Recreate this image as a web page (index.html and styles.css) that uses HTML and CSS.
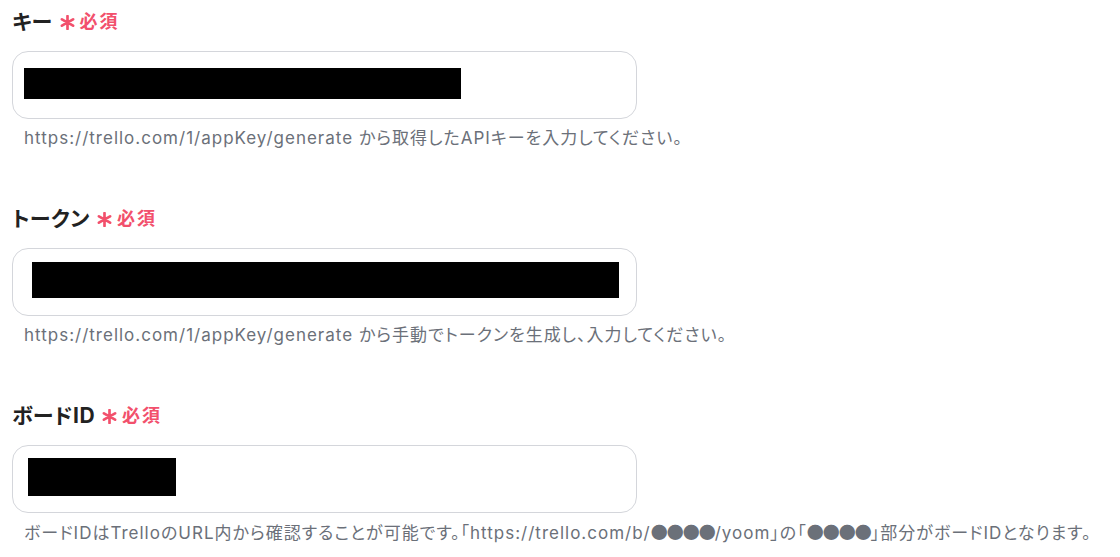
FILE: index.html
```html
<!DOCTYPE html>
<html lang="ja">

<head>
    <meta charset="UTF-8">
    <meta name="viewport" content="width=device-width, initial-scale=1.0">
    <title>Trello 連携設定</title>
    <link rel="stylesheet" href="styles.css">
</head>

<body>
    <div class="form">
        <div class="field">
            <label class="label">キー
                <span class="required">
                    <svg class="mark" viewBox="0 0 14 14"><path d="M7 1v12M1.8 4l10.4 6M1.8 10l10.4-6" /></svg>必須
                </span>
            </label>
            <div class="input">
                <span class="mask mask-key"></span>
            </div>
            <p class="help">https://trello.com/1/appKey/generate から取得したAPIキーを入力してください。</p>
        </div>

        <div class="field">
            <label class="label">トークン
                <span class="required">
                    <svg class="mark" viewBox="0 0 14 14"><path d="M7 1v12M1.8 4l10.4 6M1.8 10l10.4-6" /></svg>必須
                </span>
            </label>
            <div class="input">
                <span class="mask mask-token"></span>
            </div>
            <p class="help">https://trello.com/1/appKey/generate から手動でトークンを生成し、入力してください。</p>
        </div>

        <div class="field">
            <label class="label">ボードID
                <span class="required">
                    <svg class="mark" viewBox="0 0 14 14"><path d="M7 1v12M1.8 4l10.4 6M1.8 10l10.4-6" /></svg>必須
                </span>
            </label>
            <div class="input">
                <span class="mask mask-board"></span>
            </div>
            <p class="help">ボードIDはTrelloのURL内から確認することが可能です。「https://trello.com/b/<span class="dots">●●●●</span>/yoom」の「<span class="dots">●●●●</span>」部分がボードIDとなります。</p>
        </div>
    </div>
</body>

</html>
```

FILE: styles.css
```css
body {
    margin: 0;
    background: #ffffff;
    font-family: "Inter", "Noto Sans CJK JP", sans-serif;
    font-feature-settings: "palt";
    color: #222222;
}

.form {
    padding: 8px 0 0 12px;
}

.field {
    margin-bottom: 55px;
}

.field:last-child {
    margin-bottom: 0;
}

.label {
    display: flex;
    align-items: center;
    font-size: 21px;
    font-weight: 700;
    line-height: 28px;
    letter-spacing: 0.5px;
    color: #222222;
}

.required {
    display: flex;
    align-items: center;
    margin-left: 7px;
    font-size: 18px;
    font-weight: 700;
    letter-spacing: 2px;
    color: #f2506c;
}

.mark {
    width: 15px;
    height: 15px;
    margin: 1px 5px 0 0;
    fill: none;
    stroke: #f2506c;
    stroke-width: 2.5;
    stroke-linecap: round;
}

.input {
    width: 623px;
    height: 66px;
    margin-top: 15px;
    border: 1px solid #d4d6db;
    border-radius: 16px;
    display: flex;
    align-items: center;
}

.mask {
    display: block;
    margin-bottom: 4px;
    background: #000000;
}

.mask-key {
    width: 437px;
    height: 31px;
    margin-left: 11px;
}

.mask-token {
    width: 587px;
    height: 36px;
    margin-left: 19px;
}

.mask-board {
    width: 148px;
    height: 38px;
    margin-left: 15px;
}

.help {
    margin: 7px 0 0 12px;
    font-size: 17px;
    line-height: 24px;
    letter-spacing: 1px;
    color: #6b7079;
}

.dots {
    font-family: "Noto Sans CJK JP", sans-serif;
    font-feature-settings: normal;
    letter-spacing: -1px;
}
```
